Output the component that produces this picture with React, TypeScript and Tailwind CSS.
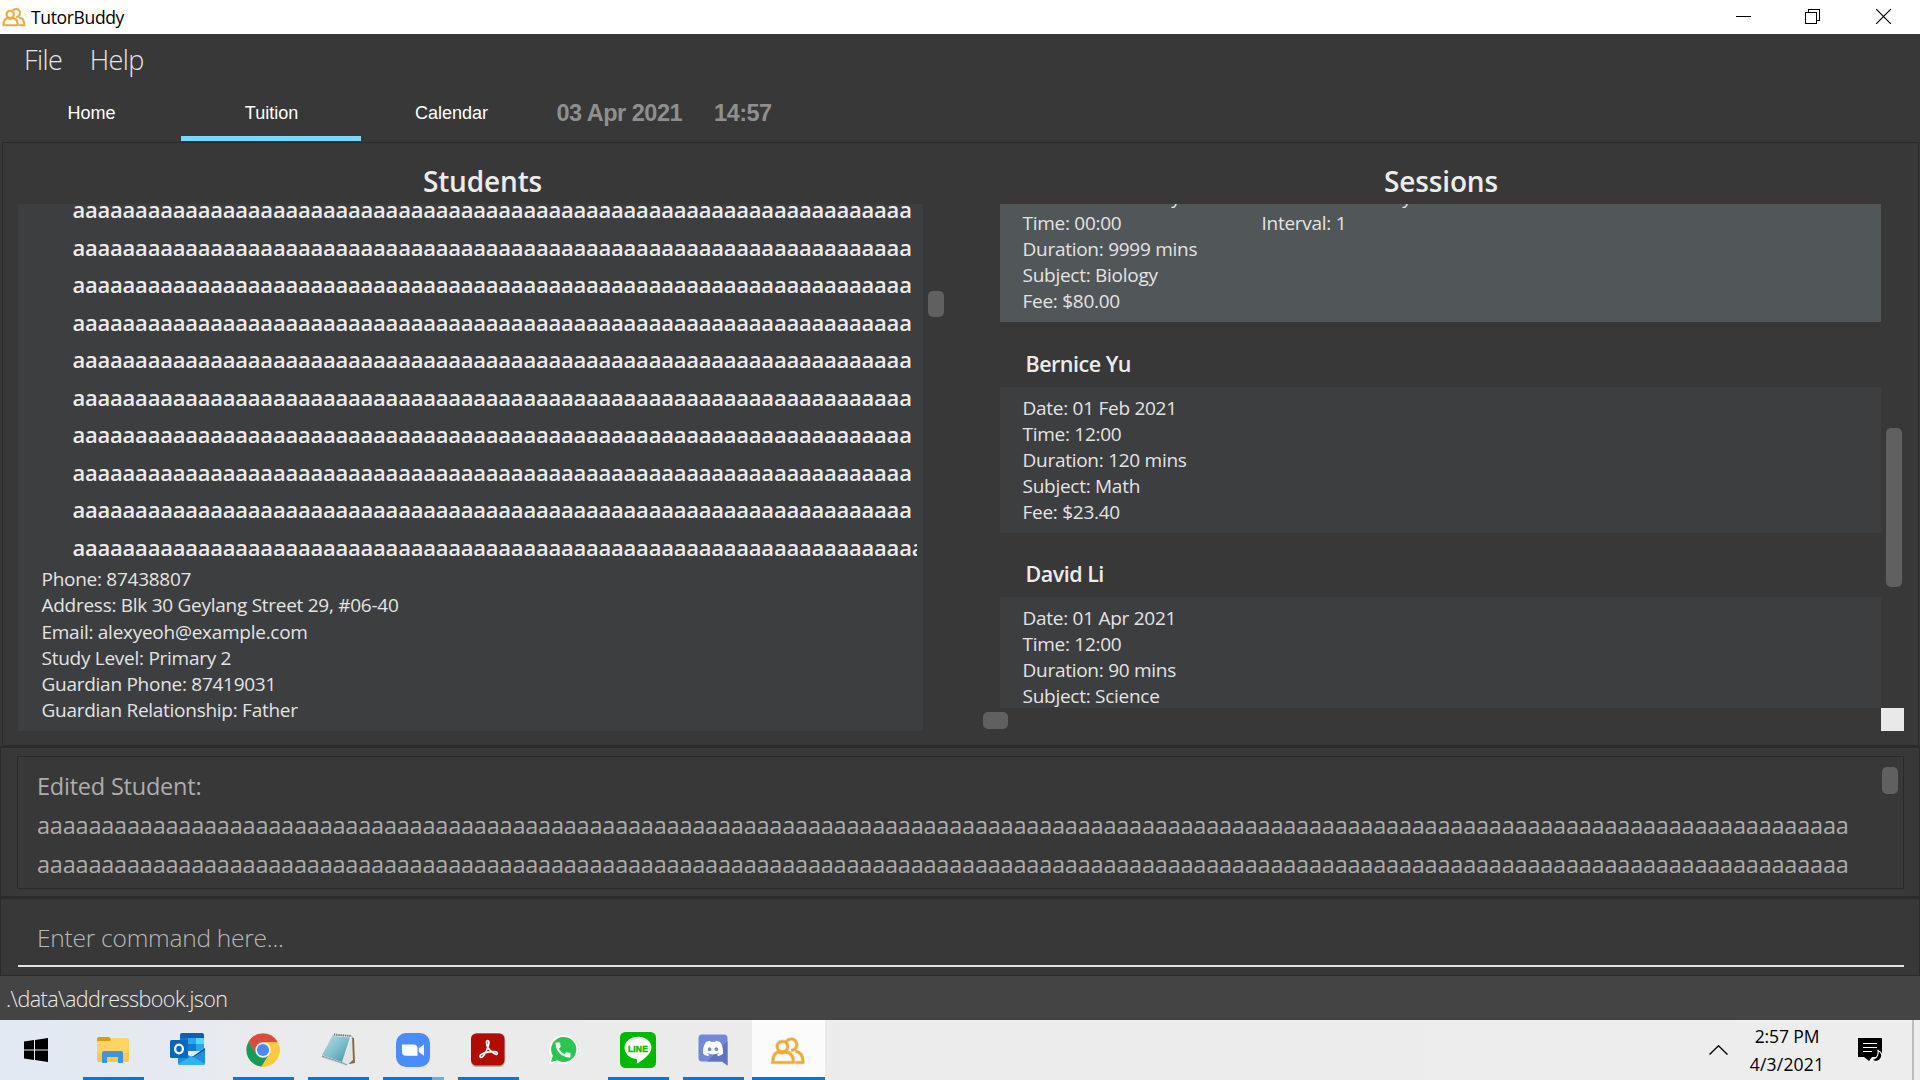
import type { ReactNode } from "react";
import { FaDiscord } from "react-icons/fa";
import { MdCall } from "react-icons/md";

const nameLines = Array.from({ length: 10 }, (_, i) => "a".repeat(i === 9 ? 68 : 67));
const resultLines = Array.from({ length: 2 }, () => "a".repeat(141));

const studentDetails = [
  "Phone: 87438807",
  "Address: Blk 30 Geylang Street 29, #06-40",
  "Email: alexyeoh@example.com",
  "Study Level: Primary 2",
  "Guardian Phone: 87419031",
  "Guardian Relationship: Father",
];

function PeopleIcon({ className }: { className: string }) {
  return (
    <svg className={className} viewBox="0 0 34 29" fill="none" stroke="#a8905c" strokeOpacity="0.45" strokeWidth="3.6" strokeLinejoin="round">
      <g>
        <path d="M15.6 5.2a5.7 5.7 0 1 1 4.6 9.2M24.5 15.2c5.5 1 7.6 4.800 7.600 11.300H24.500" />
        <circle cx="11.500" cy="10.600" r="5.300" />
        <path d="M1.800 26.500c0-6.500 2-10 6.400-10.600 1.800 1.400 4.800 1.400 6.600 0 5 .6 7.600 4.100 7.600 10.600z" />
      </g>
      <g stroke="#f5ab20" strokeOpacity="1" strokeWidth="2.200">
        <path d="M15.6 5.2a5.7 5.7 0 1 1 4.6 9.2M24.5 15.2c5.5 1 7.6 4.800 7.600 11.300H24.500" />
        <circle cx="11.500" cy="10.600" r="5.300" />
        <path d="M1.800 26.500c0-6.500 2-10 6.400-10.600 1.800 1.400 4.800 1.400 6.600 0 5 .6 7.600 4.100 7.600 10.600z" />
      </g>
    </svg>
  );
}

function TitleBar() {
  return (
    <header className="flex h-[34px] shrink-0 items-center bg-white text-black">
      <PeopleIcon className="ml-[2px] h-[20px] w-[24px]" />
      <span className="ml-[5px] text-[17.5px] leading-[34px] tracking-[-0.35px]">TutorBuddy</span>
      <div className="ml-auto flex items-center pr-[29px] pb-px">
        <svg className="mr-[54px] h-[15px] w-[15px]" viewBox="0 0 15 15" shapeRendering="crispEdges">
          <path d="M0 7.500h15" stroke="#000" />
        </svg>
        <svg className="mr-[56px] h-[15px] w-[15px]" viewBox="0 0 15 15" fill="none" stroke="#000" shapeRendering="crispEdges">
          <path d="M3.500 3V.500h11v11H12" />
          <path d="M.500 3.500h11v11H.500z" />
        </svg>
        <svg className="h-[15px] w-[15px]" viewBox="0 0 15 15" stroke="#000" strokeWidth="1.200">
          <path d="M0 0l15 15M15 0L0 15" />
        </svg>
      </div>
    </header>
  );
}

function Tab({ label, active }: { label: string; active?: boolean }) {
  return (
    <div
      className={
        active
          ? "h-[53px] w-[180px] border-b-[5px] border-[#7cd8fb] pl-px text-center leading-[50px]"
          : "h-[53px] w-[180px] pl-px text-center leading-[50px]"
      }
    >
      {label}
    </div>
  );
}

function SessionCard({ rows, extra, selected }: { rows: string[]; extra?: string[]; selected?: boolean }) {
  return (
    <div
      className={
        selected
          ? "flex h-[146px] w-[881px] shrink-0 bg-[#515658] pl-[22.500px] pt-[8px]"
          : "flex h-[146px] w-[881px] shrink-0 bg-[#3c3e3f] pl-[22.500px] pt-[8px]"
      }
    >
      <div className="w-[239px]">
        {rows.map((r) => (
          <p key={r} className="whitespace-nowrap leading-[26px]">{r}</p>
        ))}
      </div>
      <div>
        {extra?.map((r) => (
          <p key={r} className="whitespace-nowrap leading-[26px]">{r}</p>
        ))}
      </div>
    </div>
  );
}

function SessionName({ children }: { children: ReactNode }) {
  return (
    <h3 className="h-[64.5px] shrink-0 pl-[25.500px] pt-[22.600px] text-[21.500px] font-semibold leading-[38px] tracking-[-0.5px] text-[#ececec]">
      {children}
    </h3>
  );
}

function PaneTitle({ children }: { children: ReactNode }) {
  return (
    <h2 className="h-[61px] shrink-0 pl-px pt-[19px] text-center text-[28px] font-semibold leading-[38px] tracking-[-0.15px] text-[#ececec]">
      {children}
    </h2>
  );
}

function StudentsPane() {
  return (
    <section className="flex w-[928px] flex-col">
      <PaneTitle>Students</PaneTitle>
      <div className="flex">
        <div className="h-[527px] w-[905px] overflow-hidden bg-[#3c3e3f]">
          <div className="mt-[-13px] w-[899px] overflow-hidden pl-[54.500px] text-[22px] font-semibold leading-[37.500px] tracking-[-0.237px] text-[#ececec]">
            {nameLines.map((line, i) => (
              <p key={i} className="whitespace-nowrap">{line}</p>
            ))}
          </div>
          <div className="pl-[23.500px] leading-[26.250px]">
            {studentDetails.map((d) => (
              <p key={d}>{d}</p>
            ))}
          </div>
        </div>
        <div className="ml-[5px] mt-[87px] h-[26px] w-[16px] rounded-[5px] bg-[#606060]" />
      </div>
    </section>
  );
}

function SessionsPane() {
  return (
    <section className="flex w-[927px] flex-col">
      <PaneTitle>Sessions</PaneTitle>
      <div className="flex h-[504px]">
        <div className="flex h-[504px] w-[905px] flex-col overflow-hidden pl-[23px]">
          <div className="mt-[-28px] flex flex-col">
            <SessionCard
              selected
              rows={["Start Date: 01 May 2021", "Time: 00:00", "Duration: 9999 mins", "Subject: Biology", "Fee: $80.00"]}
              extra={["End Date: 30 May 2021", "Interval: 1"]}
            />
            <SessionName>Bernice Yu</SessionName>
            <SessionCard rows={["Date: 01 Feb 2021", "Time: 12:00", "Duration: 120 mins", "Subject: Math", "Fee: $23.40"]} />
            <SessionName>David Li</SessionName>
            <SessionCard rows={["Date: 01 Apr 2021", "Time: 12:00", "Duration: 90 mins", "Subject: Science"]} />
          </div>
        </div>
        <div className="ml-[4px] mt-[224px] h-[159px] w-[16px] rounded-[5px] bg-[#606060]" />
      </div>
      <div className="flex h-[23px] justify-between">
        <div className="ml-[6px] mt-[4px] h-[17px] w-[25px] rounded-[5px] bg-[#606060]" />
        <div className="h-[23px] w-[23px] bg-[#e9e9e9]" />
      </div>
    </section>
  );
}

function ExplorerIcon() {
  return (
    <svg className="h-[34px] w-[34px]" viewBox="0 0 34 34">
      <path d="M1 6a2 2 0 0 1 2-2h10l3 3v6H1z" fill="#dd9a05" />
      <path d="M1 8h13l2-3h15a2 2 0 0 1 2 2v20a2 2 0 0 1-2 2H3a2 2 0 0 1-2-2z" fill="#fdd465" />
      <path d="M1 20h32v7a2 2 0 0 1-2 2H3a2 2 0 0 1-2-2z" fill="#fbc94a" />
      <path d="M6 30V20a2 2 0 0 1 2-2h17a2 2 0 0 1 2 2v10h-5v-6H11v6z" fill="#3a97d9" />
    </svg>
  );
}

function OutlookIcon() {
  return (
    <svg className="h-[36px] w-[36px]" viewBox="0 0 36 36">
      <path d="M11 3a2 2 0 0 1 2-2h20a2 2 0 0 1 2 2v16H11z" fill="#0f5fad" />
      <path d="M11 6h8v6h-8z" fill="#1173c9" />
      <path d="M19 6h8v6h-8z" fill="#28a8ea" />
      <path d="M27 6h8v6h-8z" fill="#50d9ff" />
      <path d="M19 12h8v7h-8z" fill="#1479d0" />
      <path d="M27 12h8v7h-8z" fill="#28a8ea" />
      <path d="M9 18l14 7 13-8v14a2 2 0 0 1-2 2H11a2 2 0 0 1-2-2z" fill="#1c8fe0" />
      <path d="M9 32l14-8 13 8-2 1H11z" fill="#33b2f0" />
      <path d="M23 25l13-9v2L24 25z" fill="#0a4a8c" />
      <rect x="1" y="8" width="18" height="18" rx="1.500" fill="#0a66b8" />
      <ellipse cx="10" cy="17" rx="3.900" ry="4.300" fill="none" stroke="#fff" strokeWidth="2.300" />
    </svg>
  );
}

function ChromeIcon() {
  return (
    <svg className="h-[34px] w-[34px]" viewBox="0 0 48 48">
      <circle cx="24" cy="24" r="23.500" fill="#fdc93e" />
      <path d="M24 13h20.700A23.500 23.500 0 0 0 3.650 12.250L14.500 30z" fill="#da4a3d" />
      <path d="M14.500 29.500L3.650 12.250A23.500 23.500 0 0 0 22 47.400L33 29z" fill="#189b58" />
      <path d="M33.500 29.500L22 47.400A23.500 23.500 0 0 0 44.700 13H24z" fill="#fdc93e" />
      <circle cx="24" cy="24" r="10.800" fill="#f4f4f4" />
      <circle cx="24" cy="24" r="8.600" fill="#4a8af4" />
    </svg>
  );
}

function NotepadIcon() {
  return (
    <svg className="h-[36px] w-[36px]" viewBox="0 0 36 36">
      <defs>
        <linearGradient id="pad" x1="0" y1="0" x2="1" y2="1">
          <stop offset="0" stopColor="#b7dde4" />
          <stop offset="0.500" stopColor="#7fc0cc" />
          <stop offset="1" stopColor="#3f93a5" />
        </linearGradient>
      </defs>
      <path d="M31 5l3 1 1 25-6 1z" fill="#8a6a3a" />
      <path d="M13 3l19 1-1 25-4 4-25-8z" fill="#e9eef0" stroke="#9aa4a8" strokeWidth="0.600" />
      <path d="M32 5l1 23-6 5-5-3z" fill="#dfe4e6" />
      <path d="M13 4l17 1.500-8 24.500-20-7z" fill="url(#pad)" />
      <path d="M14 2.500l17 1.500" stroke="#70777a" strokeWidth="2" strokeDasharray="1.200 1" />
      <path d="M2 24l21 7 4 2" stroke="#8b979b" strokeWidth="1" fill="none" />
    </svg>
  );
}

function ZoomIcon() {
  return (
    <svg className="h-[34px] w-[34px]" viewBox="0 0 34 34">
      <rect width="34" height="34" rx="10" fill="#4a8cfb" />
      <path d="M6 11.500h11.500a4 4 0 0 1 4 4v7.300H10a4 4 0 0 1-4-4z" fill="#fff" />
      <path d="M22.800 15.200l5.200-3.700v11.300l-5.200-3.700z" fill="#fff" />
    </svg>
  );
}

function AcrobatIcon() {
  return (
    <svg className="h-[34px] w-[34px]" viewBox="0 0 34 34">
      <rect width="34" height="34" rx="5.500" fill="#8f8f8f" fillOpacity="0.600" />
      <rect y="0.500" width="33.500" height="32" rx="5.500" fill="#b30b00" />
      <path
        d="M16.700 14.500c-1.600-4-1.600-6.900 0-6.900s1.700 2.900 0 6.900c-1.500 4.200-4.300 10-7 10-2.600-1.800 1.500-4.300 7-5.400 5-.9 9.500-.6 9.700 1.200.100 2.200-4.500 1.200-9.700-5.800z"
        fill="none"
        stroke="#fff"
        strokeWidth="1.700"
        strokeLinejoin="round"
      />
    </svg>
  );
}

function WhatsAppIcon() {
  return (
    <div className="relative h-[32px] w-[32px]">
      <svg className="h-[32px] w-[32px]" viewBox="0 0 32 32">
        <path d="M1 31l2.200-8A15 15 0 1 1 9 28.900z" fill="#fff" stroke="#dcdcdc" strokeWidth="0.500" />
        <path d="M4 28l1.800-6.300A12.600 12.600 0 1 1 10.300 26.300z" fill="#2cc551" />
      </svg>
      <MdCall className="absolute left-[6px] top-[6px] h-[20px] w-[20px] text-white" />
    </div>
  );
}

function LineIcon() {
  return (
    <svg className="h-[36px] w-[36px]" viewBox="0 0 36 36">
      <rect width="36" height="36" rx="5.500" fill="#00b900" />
      <path d="M18 4.800c7.500 0 13.500 4.900 13.500 11 0 5.700-8 11.700-13.500 15.300-1.200.7-1.300 0-1.100-1.200.3-1.700.3-2.500-.9-2.800C9.400 26.100 4.500 21.500 4.500 15.800c0-6.100 6-11 13.500-11z" fill="#fff" />
      <text x="18" y="19.800" textAnchor="middle" fontFamily="Liberation Sans, sans-serif" fontWeight="700" fontSize="8.600" letterSpacing="0.100" fill="#00b900" stroke="#00b900" strokeWidth="0.400">LINE</text>
    </svg>
  );
}

function DiscordIcon() {
  return (
    <div className="relative h-[32px] w-[30px]">
      <svg className="h-[32px] w-[30px]" viewBox="0 0 30 32">
        <path d="M4 .500h22a3.500 3.500 0 0 1 3.500 3.500v27.500L24 27.500H4A3.500 3.500 0 0 1 .500 24V4A3.500 3.500 0 0 1 4 .500z" fill="#7289da" />
        <path d="M29.500 7v24.500L24 27.500H9z" fill="#5f74bd" />
      </svg>
      <FaDiscord className="absolute left-[4px] top-[4px] h-[21px] w-[22px] text-white" />
    </div>
  );
}

function TaskCell({ children, running }: { children: ReactNode; running?: boolean }) {
  return (
    <div className="flex h-[60px] w-[75px] flex-col items-center">
      <div className="flex h-[57px] items-center pr-[2px] pt-[2px]">{children}</div>
      {running && <div className="h-[3px] w-[61px] bg-[#0078d7]" />}
    </div>
  );
}

function Taskbar() {
  return (
    <footer className="flex h-[60px] shrink-0 bg-linear-to-r from-[#e2e9f3] via-[#ebebeb] via-20% to-[#ededed] text-black">
      <div className="flex w-[76px] items-center pl-[24px]">
        <svg className="h-[24px] w-[24px]" viewBox="0 0 24 24" fill="#000">
          <path d="M0 3.500l10-1.400v9.400H0zM11 2l13-2v11.500H11zM0 12.500h10v9.400L0 20.500zM11 12.500h13V24l-13-2z" />
        </svg>
      </div>
      <TaskCell running><ExplorerIcon /></TaskCell>
      <div className="flex h-[60px] w-[75px] justify-center">
        <div className="flex h-[57px] items-center pr-[3px] pt-[3px]"><OutlookIcon /></div>
      </div>
      <TaskCell running><ChromeIcon /></TaskCell>
      <TaskCell running><NotepadIcon /></TaskCell>
      <div className="flex h-[60px] w-[75px] flex-col items-center">
        <div className="flex h-[57px] items-center pr-[2px] pt-[2px]"><ZoomIcon /></div>
        <div className="flex h-[3px] w-[61px]">
          <div className="w-[49px] bg-[#0078d7]" />
          <div className="w-[12px] bg-[#63aee6]" />
        </div>
      </div>
      <TaskCell running><AcrobatIcon /></TaskCell>
      <TaskCell><WhatsAppIcon /></TaskCell>
      <TaskCell running><LineIcon /></TaskCell>
      <TaskCell running><DiscordIcon /></TaskCell>
      <div className="ml-px flex h-[60px] w-[73px] flex-col items-center bg-[#fbfbfb]">
        <div className="flex h-[57px] items-center pr-px pt-[4px]"><PeopleIcon className="h-[29px] w-[34px]" /></div>
        <div className="h-[3px] w-[73px] bg-[#0078d7]" />
      </div>
      <div className="ml-auto flex items-center">
        <svg className="mr-[14px] h-[10px] w-[19px]" viewBox="0 0 19 10" fill="none" stroke="#000" strokeWidth="1.400">
          <path d="M.500 9.500l9-8.700 9 8.700" />
        </svg>
        <div className="w-[90px] text-center text-[17.500px] leading-[28.300px]">
          <p className="tracking-[-0.1px]">2:57 PM</p>
          <p className="tracking-[0.2px]">4/3/2021</p>
        </div>
        <svg className="ml-[26px] h-[24px] w-[24px]" viewBox="0 0 24 24">
          <path d="M0 0h24v19H14l-3 4-5-4H0z" fill="#000" />
          <path d="M5 5.500h14M5 9.500h14M5 13.500h9" stroke="#fff" strokeWidth="1.100" />
          <path d="M20 12.500c3 1.500 4.500 4.500 3.200 7.500-1.700 4-6.700 4.500-9.700 1.500 3.500 0 7.500-3 6.500-9z" fill="#000" stroke="#fff" strokeWidth="1.100" />
        </svg>
        <div className="ml-[30px] mr-[6px] h-[60px] w-[2px] bg-[#bdbdbd]" />
      </div>
    </footer>
  );
}

export default function App() {
  return (
    <div className="flex h-[1080px] w-[1920px] flex-col overflow-hidden bg-[#383838] font-['Open_Sans',sans-serif] text-[19px] tracking-[-0.27px] text-[#e4e4e4]">
      <TitleBar />
      <nav className="flex h-[54px] shrink-0 gap-[27.500px] pl-[24px] text-[27px] font-light leading-[52px] tracking-[-0.6px] text-[#e6e6e6]">
        <span>File</span>
        <span>Help</span>
      </nav>
      <div className="flex h-[54px] shrink-0 pl-px font-['Liberation_Sans',sans-serif] text-[18px] tracking-normal text-white">
        <Tab label="Home" />
        <Tab label="Tuition" active />
        <Tab label="Calendar" />
        <div className="ml-[15.500px] flex gap-[32px] text-[23.500px] font-bold leading-[50px] tracking-[-0.5px] text-[#8f8f8f]">
          <span>03 Apr 2021</span>
          <span>14:57</span>
        </div>
      </div>
      <main className="ml-[2px] mr-px flex h-[604px] shrink-0 gap-[31px] border border-[#2b2b2b] pl-[15px]">
        <StudentsPane />
        <SessionsPane />
      </main>
      <section className="h-[152px] shrink-0 border-y-[2px] border-x border-[#2b2b2b] pl-[16px] pr-[15px] pt-[8px]">
        <div className="flex h-[133px] justify-between border border-[#2a2a2a] pl-[19px] pt-[10px]">
          <div className="text-[23.500px] leading-[39px] text-[#adadad]">
            <p className="tracking-[-0.22px]">Edited Student:</p>
            {resultLines.map((line, i) => (
              <p key={i} className="whitespace-nowrap tracking-[-0.21px]">{line}</p>
            ))}
          </div>
          <div className="mr-[5px] h-[27px] w-[16px] rounded-[5px] bg-[#606060]" />
        </div>
      </section>
      <section className="h-[78px] shrink-0 border border-[#2b2b2b] pl-[17px] pr-[15px]">
        <div className="h-[68px] border-b-2 border-[#e4e4e4] pl-[19px] text-[24.500px] font-light leading-[77px] tracking-[-0.24px] text-[#b8b8b8]">
          Enter command here...
        </div>
      </section>
      <div className="h-[44px] shrink-0 bg-[#444444] pl-[6px] text-[21.500px] font-light leading-[45px] tracking-[-0.52px] text-[#ececec]">
        .\data\addressbook.json
      </div>
      <Taskbar />
    </div>
  );
}
